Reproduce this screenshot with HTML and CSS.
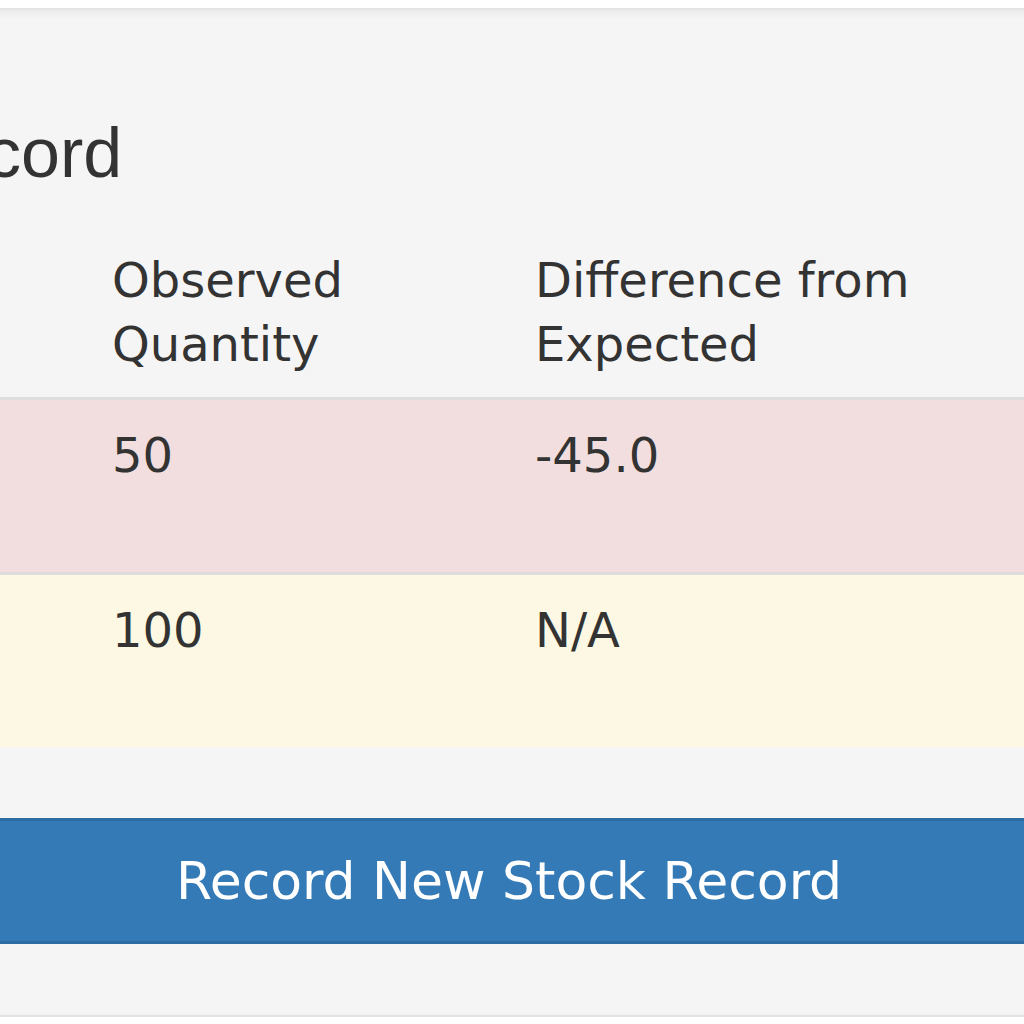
FILE: index.html
```html
<!DOCTYPE html>
<html lang="en">
<head>
<meta charset="utf-8">
<title>Stock Record</title>
<link rel="stylesheet" href="styles.css">
</head>
<body>
<div class="viewport">
  <div class="well">
    <h2 class="title">Stock Record</h2>
    <table class="records">
      <colgroup>
        <col class="c1"><col class="c2"><col class="c3"><col class="c4">
      </colgroup>
      <thead>
        <tr>
          <th>Date</th>
          <th>Observed Quantity</th>
          <th>Difference from Expected</th>
          <th></th>
        </tr>
      </thead>
      <tbody>
        <tr class="danger">
          <td></td>
          <td>50</td>
          <td>-45.0</td>
          <td></td>
        </tr>
        <tr class="warning">
          <td></td>
          <td>100</td>
          <td>N/A</td>
          <td></td>
        </tr>
      </tbody>
    </table>
    <button class="btn-primary" type="button">Record New Stock Record</button>
  </div>
</div>
</body>
</html>
```
FILE: styles.css
```css
html, body {
  margin: 0;
  padding: 0;
  background: #ffffff;
  overflow: hidden;
}

body {
  padding-top: 8px;
  font-family: "DejaVu Sans", Verdana, sans-serif;
  color: #333333;
}

.viewport {
  width: 1024px;
  overflow: hidden;
}

.well {
  box-sizing: border-box;
  width: 1728px;
  margin-left: -355px;
  padding: 0 40px 71px;
  background: #f5f5f5;
  border: 2px solid #e3e3e3;
  box-shadow: inset 0 3px 8px rgba(0, 0, 0, 0.06);
}

.title {
  margin: 105px 0 0;
  padding-left: 15px;
  font-family: "Liberation Sans", Arial, sans-serif;
  font-weight: 400;
  font-size: 70px;
  line-height: 77px;
  height: 77px;
  color: #333333;
}

.records {
  width: 100%;
  margin-top: 35px;
  border-collapse: collapse;
  table-layout: fixed;
  font-size: 48px;
  line-height: 64px;
}

.c1 { width: 409px; }
.c2 { width: 423px; }
.c3 { width: 520px; }

.records th {
  text-align: left;
  font-weight: 400;
  vertical-align: bottom;
  padding: 21px 16px 21px;
  border-bottom: 3px solid #dddddd;
}

.records td {
  vertical-align: top;
  padding: 23px 16px 21px;
  height: 128px;
  border-top: 3px solid #dddddd;
}

.records tbody tr:first-child td {
  border-top: 0;
}

.danger td { background: #f2dede; }
.warning td { background: #fcf8e3; }

.btn-primary {
  display: block;
  box-sizing: border-box;
  width: 100%;
  height: 126px;
  margin-top: 71px;
  padding: 0;
  border: 3px solid #2e6da4;
  background: #337ab7;
  color: #ffffff;
  font-family: "DejaVu Sans", Verdana, sans-serif;
  font-size: 52px;
  line-height: 60px;
  text-align: center;
  cursor: pointer;
}
```
